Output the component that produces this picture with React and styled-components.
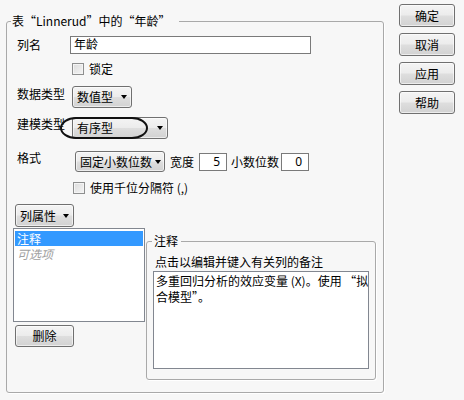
import React from 'react';
import styled, { createGlobalStyle } from 'styled-components';

const GlobalStyle = createGlobalStyle`
  html, body {
    margin: 0;
    padding: 0;
    background: #f7f7f7;
  }
  body {
    font-family: "Noto Sans CJK SC", "Noto Sans", sans-serif;
    font-size: 12px;
    color: #000;
  }
`;

const Window = styled.div`
  width: 464px;
  height: 400px;
  display: flex;
  align-items: flex-start;
  padding-left: 6px;
  box-sizing: border-box;
`;

const Group = styled.fieldset`
  margin: ${p => p.$top || 0}px 0 0 ${p => p.$left || 0}px;
  padding: 0;
  min-width: 0;
  width: ${p => p.$w}px;
  height: ${p => p.$h}px;
  box-sizing: border-box;
  border: 1px solid #a9a9a9;
  border-radius: 3px;
  box-shadow: 1px 1px 0 #fff;
`;

const Legend = styled.legend`
  margin-left: ${p => p.$ml}px;
  padding: 0 ${p => p.$pr}px 0 ${p => p.$pl}px;
  line-height: 14px;
  font-size: 12px;
`;

const Body = styled.div`
  display: flex;
  flex-direction: column;
  padding-left: 10px;
`;

const Row = styled.div`
  position: relative;
  display: flex;
  align-items: ${p => p.$align || 'center'};
  margin-top: ${p => p.$mt || 0}px;
  margin-left: ${p => p.$ml || 0}px;
  line-height: 14px;
`;

const Label = styled.span`
  width: ${p => p.$w}px;
  flex: none;
  align-self: ${p => p.$self || 'auto'};
  padding-top: ${p => p.$pt || 0}px;
  line-height: 14px;
  white-space: nowrap;
`;

const Text = styled.span`
  margin-left: ${p => p.$ml || 0}px;
  white-space: nowrap;
`;

const TextField = styled.div`
  width: ${p => p.$w}px;
  height: ${p => p.$h || 18}px;
  margin-left: ${p => p.$ml || 0}px;
  box-sizing: border-box;
  border: 1px solid #7a7a7a;
  background: #fff;
  padding: 0 ${p => (p.$right ? 6 : 3)}px;
  line-height: 16px;
  text-align: ${p => (p.$right ? 'right' : 'left')};
  font-family: "Noto Sans", "Noto Sans CJK SC", sans-serif;
`;

const Box = styled.span`
  width: 12px;
  height: 12px;
  flex: none;
  box-sizing: border-box;
  border: 1px solid #8e8f8f;
  background: linear-gradient(135deg, #dcdcdc 0%, #f4f4f4 100%);
  box-shadow: inset 0 0 0 1px #f4f4f4;
`;

const buttonFace = `
  box-sizing: border-box;
  border: 1px solid #707070;
  border-radius: 3px;
  background: linear-gradient(#f4f4f4 0%, #ececec 48%, #dedede 52%, #d2d2d2 100%);
  box-shadow: inset 0 0 0 1px rgba(255,255,255,0.6);
  font-family: inherit;
  font-size: 12px;
  color: #000;
  padding: 0;
`;

const Button = styled.button`
  ${buttonFace}
  width: ${p => p.$w || 56}px;
  height: ${p => p.$h || 23}px;
  margin-left: ${p => p.$ml || 0}px;
  margin-top: ${p => p.$mt || 0}px;
  line-height: 14px;
`;

const Combo = styled.div`
  ${buttonFace}
  width: ${p => p.$w}px;
  height: ${p => p.$h || 22}px;
  display: flex;
  align-items: center;
  justify-content: space-between;
  padding: 0 4px 0 4px;
  flex: none;
  line-height: 14px;
  white-space: nowrap;
`;

const Arrow = styled.span`
  width: 0;
  height: 0;
  flex: none;
  margin-left: 3px;
  border-left: 3.5px solid transparent;
  border-right: 3.5px solid transparent;
  border-top: 4px solid #000;
`;

const Side = styled.div`
  display: flex;
  flex-direction: column;
  gap: 6px;
  margin: 4px 0 0 15px;
`;

const Ring = styled.span`
  position: absolute;
  left: 43px;
  top: 0;
  width: 88px;
  height: 22px;
  box-sizing: border-box;
  border: 2px solid #111;
  border-radius: 16px / 11px;
  pointer-events: none;
`;

const Split = styled.div`
  display: flex;
  align-items: flex-start;
  margin: 1px 0 0 -4px;
`;

const Column = styled.div`
  display: flex;
  flex-direction: column;
  align-items: flex-start;
`;

const List = styled.div`
  width: 132px;
  height: 94px;
  box-sizing: border-box;
  border: 1px solid #828790;
  background: #fff;
  padding: 2px 1px;
`;

const Item = styled.div`
  height: 15px;
  padding-left: 2px;
  line-height: 15px;
  overflow: hidden;
  background: ${p => (p.$selected ? '#3399ff' : 'transparent')};
  color: ${p => (p.$selected ? '#fff' : p.$muted ? '#a0a0a0' : '#000')};
  font-style: ${p => (p.$muted ? 'italic' : 'normal')};
`;

const Hint = styled.div`
  margin: 7px 0 0 8px;
  line-height: 14px;
`;

const Memo = styled.div`
  width: 216px;
  height: 98px;
  margin: 2px 0 0 6px;
  box-sizing: border-box;
  border: 1px solid #828790;
  background: #fff;
  padding: 1px 2px;
  line-height: 16px;
`;

const MemoLine = styled.div`
  white-space: nowrap;
`;

export default function App() {
  return (
    <>
      <GlobalStyle />
      <Window>
        <Group $top={14} $w={378} $h={379}>
          <Legend $ml={4} $pl={1} $pr={8}>表“Linnerud”中的“年龄”</Legend>
          <Body>
            <Row $mt={8}>
              <Label $w={53}>列名</Label>
              <TextField $w={241}>年龄</TextField>
            </Row>
            <Row $mt={8} $ml={55}>
              <Box />
              <Text $ml={5}>锁定</Text>
            </Row>
            <Row $mt={10} $align="flex-start">
              <Label $w={55} $pt={1}>数据类型</Label>
              <Combo $w={60}>数值型<Arrow /></Combo>
            </Row>
            <Row $mt={9} $align="flex-start">
              <Label $w={55}>建模类型</Label>
              <Combo $w={96}>有序型<Arrow /></Combo>
              <Ring />
            </Row>
            <Row $mt={12}>
              <Label $w={58} $self="flex-start">格式</Label>
              <Combo $w={90} $h={21}>固定小数位数<Arrow /></Combo>
              <Text $ml={5}>宽度</Text>
              <TextField $w={28} $ml={5} $right>5</TextField>
              <Text $ml={4}>小数位数</Text>
              <TextField $w={28} $ml={2} $right>0</TextField>
            </Row>
            <Row $mt={9} $ml={56}>
              <Box />
              <Text $ml={5}>使用千位分隔符 (,)</Text>
            </Row>
            <Row $mt={9} $ml={-2}>
              <Combo $w={59} $h={23}>列属性<Arrow /></Combo>
            </Row>
            <Split>
              <Column>
                <List>
                  <Item $selected>注释</Item>
                  <Item $muted>可选项</Item>
                </List>
                <Button $w={59} $h={22} $ml={2} $mt={3}>删除</Button>
              </Column>
              <Group $top={6} $left={1} $w={230} $h={146}>
                <Legend $ml={5} $pl={2} $pr={3}>注释</Legend>
                <Hint>点击以编辑并键入有关列的备注</Hint>
                <Memo>
                  <MemoLine>多重回归分析的效应变量 (X)。使用 “拟</MemoLine>
                  <MemoLine>合模型”。</MemoLine>
                </Memo>
              </Group>
            </Split>
          </Body>
        </Group>
        <Side>
          <Button>确定</Button>
          <Button>取消</Button>
          <Button>应用</Button>
          <Button>帮助</Button>
        </Side>
      </Window>
    </>
  );
}
